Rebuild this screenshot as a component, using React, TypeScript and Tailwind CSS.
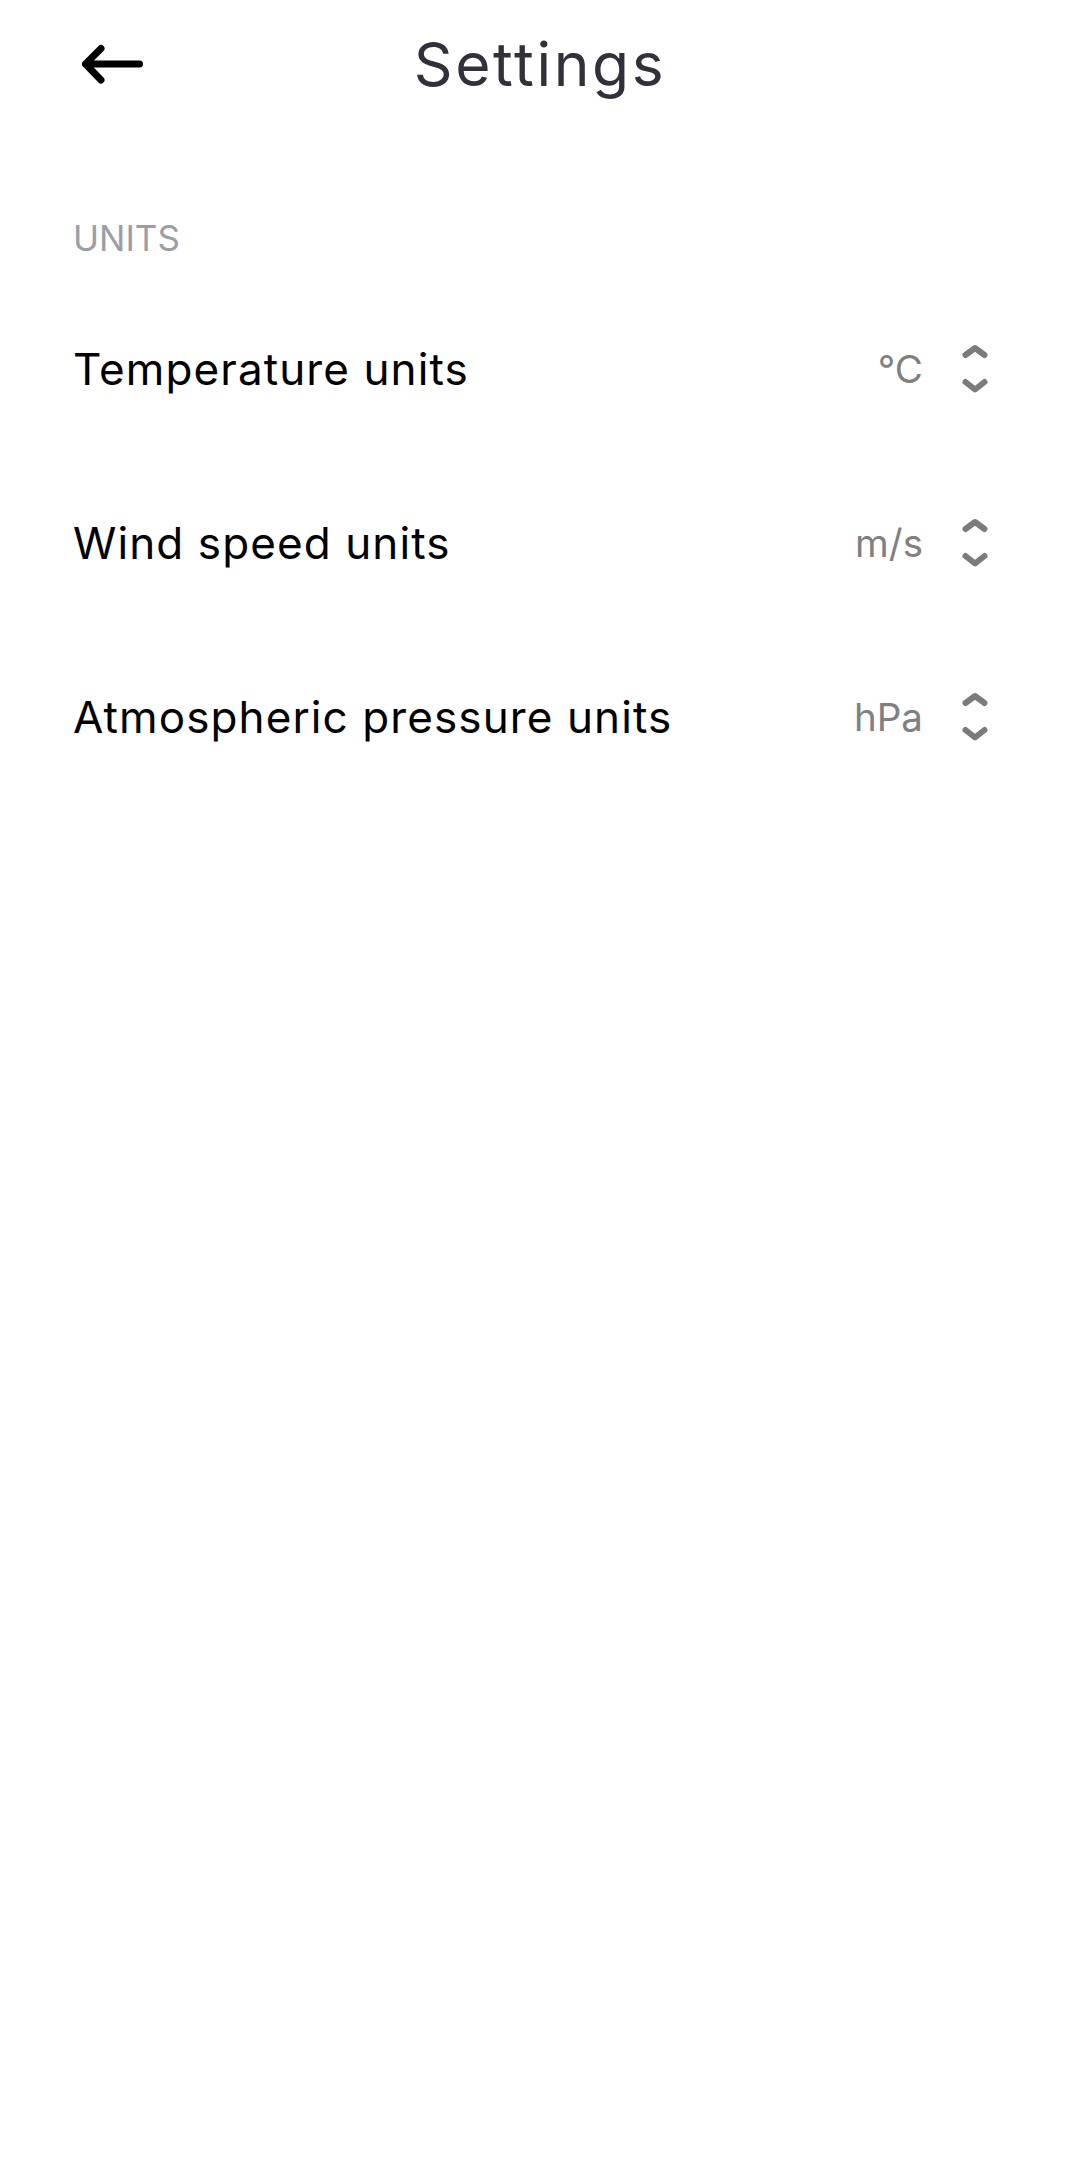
import React from "react";

function Chevrons() {
  return (
    <svg width="32" height="52" viewBox="0 0 32 52" fill="none" className="shrink-0">
      <path d="M6.5 12 L16 5 L25.5 12" stroke="#7b7b7b" strokeWidth="6" strokeLinecap="round" strokeLinejoin="round" />
      <path d="M6.5 39 L16 46.5 L25.5 39" stroke="#7b7b7b" strokeWidth="6" strokeLinecap="round" strokeLinejoin="round" />
    </svg>
  );
}

function Row({ label, value }: { label: string; value: string }) {
  return (
    <div className="flex h-[174px] items-center pl-[73px] pr-[89px]">
      <div className="flex-1 text-[44px] leading-[44px] tracking-[1.1px] text-black">{label}</div>
      <div className="mr-[36px] text-[38.5px] leading-[38.5px] text-[#808080]">{value}</div>
      <Chevrons />
    </div>
  );
}

export default function App() {
  return (
    <div className="min-h-[2172px] w-full bg-white" style={{ fontFamily: "Inter, 'Noto Sans', sans-serif" }}>
      <div className="grid h-[128px] grid-cols-[1fr_auto_1fr] items-center">
        <div className="pl-[80px]">
          <svg width="64" height="44" viewBox="0 0 64 44" fill="none">
            <path d="M59.5 22 H5.5 M21 6.5 L5.5 22 L21 38" stroke="#000" strokeWidth="7" strokeLinecap="round" strokeLinejoin="round" />
          </svg>
        </div>
        <div className="text-[60.5px] leading-[60.5px] tracking-[2.6px] text-[#30313a]">Settings</div>
        <div />
      </div>
      <div className="mt-[93px] pl-[73px] text-[35px] leading-[35px] text-[#9c9ea7]">UNITS</div>
      <div className="mt-[26px]">
        <Row label="Temperature units" value="°C" />
        <Row label="Wind speed units" value="m/s" />
        <Row label="Atmospheric pressure units" value="hPa" />
      </div>
    </div>
  );
}
